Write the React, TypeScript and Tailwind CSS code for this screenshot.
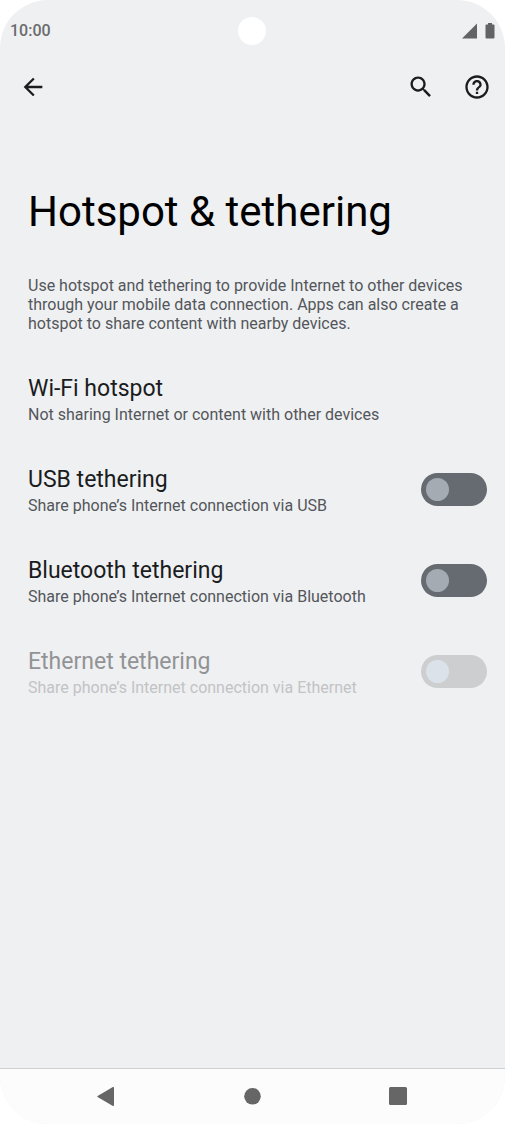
import React from 'react';

interface TetheringOption {
  id: string;
  title: string;
  summary: string;
  hasSwitch: boolean;
  disabled?: boolean;
}

const options: TetheringOption[] = [
  {
    id: 'wifi',
    title: 'Wi-Fi hotspot',
    summary: 'Not sharing Internet or content with other devices',
    hasSwitch: false
  },
  {
    id: 'usb',
    title: 'USB tethering',
    summary: 'Share phone’s Internet connection via USB',
    hasSwitch: true
  },
  {
    id: 'bluetooth',
    title: 'Bluetooth tethering',
    summary: 'Share phone’s Internet connection via Bluetooth',
    hasSwitch: true
  },
  {
    id: 'ethernet',
    title: 'Ethernet tethering',
    summary: 'Share phone’s Internet connection via Ethernet',
    hasSwitch: true,
    disabled: true
  }
];

const StatusBar: React.FC = () => (
  <div className="grid h-[62px] grid-cols-3 items-center px-[10px]">
    <span className="text-base leading-7 font-medium text-[#6b6c6e]">10:00</span>
    <div className="size-7 justify-self-center rounded-full bg-white" />
    <div className="flex items-center gap-2 justify-self-end text-[#626365]">
      <svg className="h-4 w-[15px]" viewBox="0 0 15 16" fill="currentColor">
        <path d="M15 .5v15H0z" />
      </svg>
      <svg className="h-4 w-[10px]" viewBox="0 0 10 16" fill="currentColor">
        <path d="M3 0h4v1.4h1.6c.5 0 .9.4.9.9v12.3c0 .5-.4.9-.9.9H1.4c-.5 0-.9-.4-.9-.9V2.3c0-.5.4-.9.9-.9H3z" />
      </svg>
    </div>
  </div>
);

const AppBar: React.FC = () => (
  <div className="flex h-[50px] items-center justify-between pr-[14px] pl-[19px] text-[#1a1c1e]">
    <button type="button" aria-label="Navigate up">
      <svg className="size-7" viewBox="0 0 24 24" fill="currentColor">
        <path d="M20 11H7.83l5.59-5.59L12 4l-8 8 8 8 1.41-1.41L7.83 13H20v-2z" />
      </svg>
    </button>
    <div className="flex items-center gap-7">
      <button type="button" aria-label="Search">
        <svg className="size-7" viewBox="0 0 24 24" fill="currentColor">
          <path d="M15.5 14h-.79l-.28-.27C15.41 12.59 16 11.11 16 9.5 16 5.91 13.09 3 9.5 3S3 5.91 3 9.5 5.91 16 9.5 16c1.61 0 3.09-.59 4.23-1.57l.27.28v.79l5 4.99L20.49 19l-4.99-5zm-6 0C7.01 14 5 11.99 5 9.5S7.01 5 9.5 5 14 7.01 14 9.5 11.99 14 9.5 14z" />
        </svg>
      </button>
      <button type="button" aria-label="Help">
        <svg className="size-7" viewBox="0 0 24 24" fill="currentColor">
          <path d="M11 18h2v-2h-2v2zm1-16C6.48 2 2 6.48 2 12s4.48 10 10 10 10-4.48 10-10S17.52 2 12 2zm0 18c-4.41 0-8-3.59-8-8s3.59-8 8-8 8 3.59 8 8-3.59 8-8 8zm0-14c-2.21 0-4 1.79-4 4h2c0-1.1.9-2 2-2s2 .9 2 2c0 2-3 1.75-3 5h2c0-2.25 3-2.5 3-5 0-2.21-1.79-4-4-4z" />
        </svg>
      </button>
    </div>
  </div>
);

const OptionText: React.FC<{ option: TetheringOption }> = ({ option }) => (
  <>
    <span className={option.disabled ? 'block text-[23px] leading-8 text-[#929395]' : 'block text-[23px] leading-8 text-[#1a1c1e]'}>
      {option.title}
    </span>
    <span className={option.disabled ? 'block text-base leading-[19px] text-[#c2c3c5]' : 'block text-base leading-[19px] text-[#53565a]'}>
      {option.summary}
    </span>
  </>
);

const OptionRow: React.FC<{ option: TetheringOption }> = ({ option }) => {
  if (!option.hasSwitch) {
    return (
      <button type="button" className="block w-full py-5 pr-[18px] pl-7 text-left">
        <OptionText option={option} />
      </button>
    );
  }

  return (
    <div className="flex items-center justify-between py-5 pr-[18px] pl-7">
      <label htmlFor={option.id}>
        <OptionText option={option} />
      </label>
      <input
        id={option.id}
        type="checkbox"
        role="switch"
        disabled={option.disabled}
        className="flex h-[33px] w-[66px] shrink-0 appearance-none items-center rounded-full bg-[#666b71] px-[5px] before:size-[23px] before:rounded-full before:bg-[#a5abb2] checked:justify-end disabled:bg-[#cdcecf] disabled:before:bg-[#dbe2ea]"
      />
    </div>
  );
};

const NavBar: React.FC = () => (
  <nav className="flex h-14 items-center justify-center border-t border-[#cfd0d1] bg-[#fcfcfc] text-[#666666]">
    <button type="button" aria-label="Back" className="flex w-[146px] justify-center">
      <svg className="size-5" viewBox="0 0 20 20" fill="currentColor">
        <path d="M17 .7v17.6c0 .7-.6 1-1.1.7L.6 10.1c-.5-.3-.5-.9 0-1.2L15.9 0c.5-.3 1.1 0 1.1.7z" />
      </svg>
    </button>
    <button type="button" aria-label="Home" className="flex w-[146px] justify-center">
      <svg className="size-5" viewBox="0 0 20 20" fill="currentColor">
        <circle cx="9.5" cy="9.3" r="8.3" />
      </svg>
    </button>
    <button type="button" aria-label="Overview" className="flex w-[146px] justify-center">
      <svg className="size-5" viewBox="0 0 20 20" fill="currentColor">
        <rect x="0" y="0" width="18" height="18" rx="1.5" />
      </svg>
    </button>
  </nav>
);

const App: React.FC = () => {
  return (
    <div className="min-h-screen bg-white font-[Roboto,sans-serif]">
      <div className="flex min-h-screen flex-col overflow-hidden rounded-[48px] bg-[#eff0f2]">
        <StatusBar />
        <AppBar />

        <main className="flex-1">
          <h1 className="px-7 pt-[75px] text-[42px] leading-[50px] text-black">Hotspot &amp; tethering</h1>
          <p className="px-7 pt-[39px] pb-5 text-base leading-[19px] text-[#53565a]">
            Use hotspot and tethering to provide Internet to other devices through your mobile data
            connection. Apps can also create a hotspot to share content with nearby devices.
          </p>

          {options.map((option) => (
            <OptionRow key={option.id} option={option} />
          ))}
        </main>

        <NavBar />
      </div>
    </div>
  );
};

export default App;
